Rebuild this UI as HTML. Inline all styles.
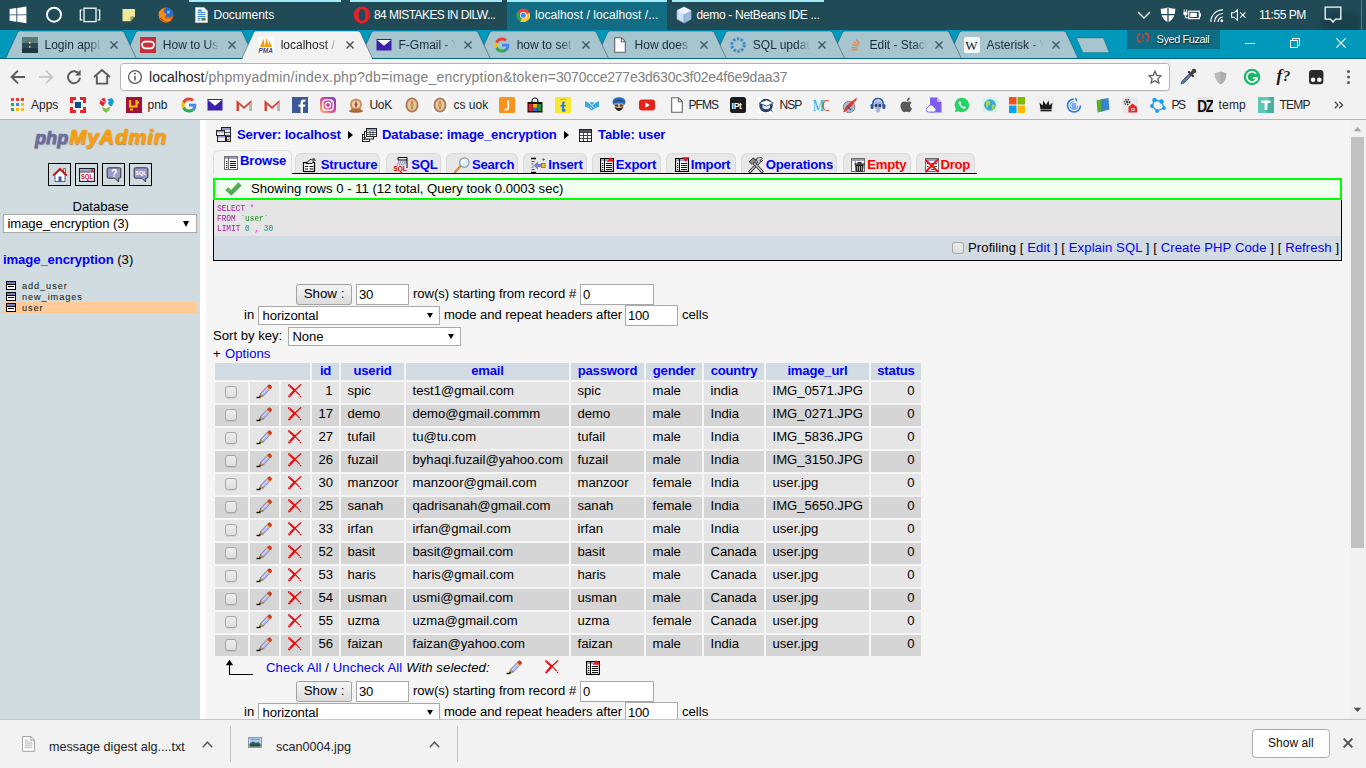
<!DOCTYPE html>
<html><head><meta charset="utf-8"><title>localhost / localhost / image_encryption / user | phpMyAdmin</title>
<style>
*{box-sizing:border-box;margin:0;padding:0}
html,body{width:1366px;height:768px;overflow:hidden;background:#f5f5f5;font-family:"Liberation Sans",sans-serif}
.abs{position:absolute}
#taskbar{position:absolute;left:0;top:0;width:1366px;height:30px;background:#1f4a56;color:#fff;font-size:12.5px}
#tabstrip{position:absolute;left:0;top:30px;width:1366px;height:29px;background:#0098bb;z-index:2}
#toolbar{position:absolute;left:0;top:58px;width:1366px;height:36px;background:#f2f2f2}
#bookmarks{position:absolute;left:0;top:94px;width:1366px;height:26px;background:#f2f2f2;border-bottom:1px solid #b6b4b6;font-size:12.5px;color:#222}
#content{position:absolute;left:0;top:120px;width:1366px;height:599px;overflow:hidden;background:#f5f5f5;font-size:13.12px;color:#000}
#side{position:absolute;left:0;top:0;width:200px;height:599px;background:#d0dce0}
#main{position:absolute;left:200px;top:0;width:1149px;height:599px;background:#f5f5f5}
#vscroll{position:absolute;left:1349px;top:0;width:17px;height:599px;background:#f1f1f1}
#dlbar{position:absolute;left:0;top:719px;width:1366px;height:49px;background:#f2f2f2;border-top:1px solid #c6c6c6;font-size:13px;color:#222}

.pg{position:absolute;left:0;top:-120px;width:1366px;height:768px}
a{color:#0000ff;text-decoration:none}
.bc{position:absolute;font-weight:bold;color:#0000ff;line-height:15px;white-space:nowrap;letter-spacing:-0.15px}
.arr{position:absolute;width:0;height:0;border-left:5.5px solid #000;border-top:4.5px solid transparent;border-bottom:4.5px solid transparent}
.tab{position:absolute;top:153px;height:20px;background:#e8e8e8;border:1px solid #dadada;border-bottom:none;border-radius:6px 6px 0 0}
.tab.act{top:150px;height:24px;background:#f5f5f5;border-color:#dcdcdc}
.tt{position:absolute;color:#0000ff;font-weight:bold;line-height:15px;letter-spacing:-0.2px;white-space:nowrap}.tt.red{color:#ff0000}
.ic{display:inline-block;width:16px;height:16px;vertical-align:-3px;margin-right:1px}
.sqlc{font-family:"Liberation Mono",monospace;font-size:7.8px;line-height:8.4px;color:#000;transform:scaleY(1.19);transform-origin:0 0;opacity:0.9}
.kw{color:#990099}.pk{color:#ff00ff}.bq{color:#008000}.nm{color:#008080}
.cb{position:absolute;width:12px;height:12px;border:1px solid #a6a6a6;border-radius:3px;background:linear-gradient(#ededed,#dedede)}
.btn{position:absolute;border:1px solid #a2a2a2;border-radius:2.5px;background:linear-gradient(#f5f5f5,#dcdcdc);text-align:center;line-height:18px;font-size:13.33px}
.inp{position:absolute;border:1px solid #a9a9a9;background:#fff;line-height:17px;padding:1px 0 0 2px;font-size:13.12px;letter-spacing:-0.3px}
.sel{position:absolute;border:1px solid #a9a9a9;background:#fff;line-height:17px;padding:0 0 0 3.5px;font-size:13.12px;letter-spacing:-0.1px}
.sel b{position:absolute;right:6px;top:6px;width:0;height:0;border-top:5.5px solid #000;border-left:3.5px solid transparent;border-right:3.5px solid transparent}
.nav{position:absolute;left:0;width:1366px;height:0}
.dt{border-collapse:separate;border-spacing:2px;table-layout:fixed;width:710px;font-size:13.12px}
.dt th{height:17px;background:#d3dce3;color:#0000ff;font-weight:bold;line-height:15px;padding:0;letter-spacing:-0.2px;vertical-align:top;text-align:center;white-space:nowrap}
.dt td{height:21px;padding:1px 6.5px 0 6.5px;line-height:15px;vertical-align:top;white-space:nowrap;overflow:hidden}
.dt tr.o td{background:#e5e5e5}.dt tr.e td{background:#d5d5d5}
.dt td.r{text-align:right}
.dt td.c{text-align:center;padding:2px 0 0 0}.dt td.c:first-child{padding-right:2px}
.cbx{display:inline-block;width:12px;height:12px;margin-top:2px;border:1px solid #a6a6a6;border-radius:3px;background:linear-gradient(#ededed,#dedede);box-shadow:0 1px 0 rgba(0,0,0,0.08)}

.logo{white-space:nowrap;line-height:24px;font-style:italic;font-weight:bold}
.php{font-size:18px;color:#6c6c9e;-webkit-text-stroke:0.7px #6c6c9e;text-shadow:0.5px 1.2px 1.2px rgba(50,50,80,0.55);letter-spacing:0.1px}
.mya{font-size:20.4px;color:#f99d10;-webkit-text-stroke:0.7px #f99d10;text-shadow:0.5px 1.2px 1.2px rgba(140,80,10,0.7);letter-spacing:0.85px;margin-left:1px}
.sbx{position:absolute;top:163px;width:23px;height:23px;border:1px solid #000}
.tl{position:absolute;left:6px;height:9px;white-space:nowrap;font-size:9.2px;line-height:9px;color:#111}
.tl svg{position:absolute;left:0;top:0}
.tl span{position:absolute;left:16px;top:0.5px;letter-spacing:0.92px}

.hl{top:0;height:2px;background:#a3ecf8}
.tk{top:8px;line-height:15px;font-size:12px;color:#fff;white-space:nowrap}

.ttl{top:8px;width:58px;height:16px;overflow:hidden;line-height:15px;font-size:12px;color:#1a2a32;white-space:nowrap;-webkit-mask-image:linear-gradient(90deg,#000 0,#000 44px,transparent 57px);mask-image:linear-gradient(90deg,#000 0,#000 44px,transparent 57px)}
.ttl.act{color:#222}
.bm{top:4px;line-height:15px;font-size:12px;color:#222;white-space:nowrap}
.dt2{top:20px;line-height:15px;font-size:12.6px;color:#222;white-space:nowrap}
</style></head><body>
<svg width="0" height="0" style="position:absolute">
<defs>
<symbol id="i-browse" viewBox="0 0 16 16"><rect x="1.5" y="1.5" width="13" height="13" fill="#fff" stroke="#6e6e6e"/><rect x="2" y="2" width="12" height="2" fill="#9a9acf"/><path d="M5.5 2v12" stroke="#6e6e6e"/><path d="M7 6.5h6M7 8.5h6M7 10.5h6M7 12.5h6" stroke="#111"/><path d="M3 6.5h1.4M3 8.5h1.4M3 10.5h1.4M3 12.5h1.4" stroke="#111"/></symbol>
<symbol id="i-struct" viewBox="0 0 16 16"><rect x="1.5" y="5.5" width="11" height="9" fill="#fff" stroke="#000" stroke-width="1.2"/><path d="M3 9.5h3M7.5 9.5h4M3 12h3M7.5 12h4" stroke="#000"/><path d="M4 6.5 L8 2.5 L13 2 L10 6.5Z" fill="#ddd" stroke="#000" stroke-width="0.9"/><path d="M9 2l3 3M11 1l3 3" stroke="#555" stroke-width="0.8"/></symbol>
<symbol id="i-sql" viewBox="0 0 16 16"><path d="M5 0.5h9v2.5h-9z" fill="#eee" stroke="#000"/><path d="M6 4l-2 4.5M8 4l-2 4.5M10 4l-2 4.5M12 4l-2 4.5M13.5 4l-1.5 3.5" stroke="#88c" stroke-width="0.9"/><path d="M14 3v8" stroke="#000"/><text x="0.4" y="14.3" font-family="Liberation Sans" font-weight="bold" font-size="6.6" fill="#d00000" textLength="13.4" lengthAdjust="spacingAndGlyphs">SQL</text></symbol>
<symbol id="i-search" viewBox="0 0 16 16"><path d="M1 15.2 L7 8.5" stroke="#d8801c" stroke-width="2.4" stroke-linecap="round"/><path d="M1 15.2 L7 8.5" stroke="#f4a94a" stroke-width="1" stroke-linecap="round"/><circle cx="10.3" cy="5.6" r="4.7" fill="#d4f0fc" stroke="#8a9aa8" stroke-width="1.2"/><circle cx="9.3" cy="4.6" r="2" fill="#fff" opacity="0.9"/></symbol>
<symbol id="i-insert" viewBox="0 0 16 16"><path d="M1 1.5h5M1 15.5h5" stroke="#000" stroke-width="1.3"/><path d="M1.5 4.5h3M1.5 7h2M1.5 10h2M1.5 12.5h3" stroke="#555"/><path d="M3.5 8.5 L8 4.5 V7 H11 V10 H8 V12.5Z" fill="#7b7bd8"/><rect x="11.5" y="6.5" width="3.6" height="4" fill="#f4c430" stroke="#8a6d00" stroke-width="0.8"/><path d="M13.5 1v3M12 2.5h3" stroke="#66c" stroke-width="0.9"/></symbol>
<symbol id="i-table" viewBox="0 0 16 16"><rect x="1.6" y="1.6" width="12.8" height="12.8" fill="#fff" stroke="#000" stroke-width="1.2"/><rect x="2.2" y="2.2" width="11.6" height="2" fill="#9a9acf"/><path d="M5.5 2v12" stroke="#000"/><path d="M7 6.5h6M7 8.5h6M7 10.5h6M7 12.5h6" stroke="#111"/><path d="M3 6.5h1.4M3 8.5h1.4M3 10.5h1.4M3 12.5h1.4" stroke="#111"/></symbol>
<symbol id="i-export" viewBox="0 0 16 16"><use href="#i-table"/><path d="M7.5 4.8 L11.5 0.2 L15.5 4.8Z" fill="#f01818"/></symbol>
<symbol id="i-import" viewBox="0 0 16 16"><use href="#i-table"/><path d="M8 0.3 H15.6 L11.8 4.9Z" fill="#e01030"/></symbol>
<symbol id="i-ops" viewBox="0 0 16 16"><path d="M2 14.5 L11.5 4.5" stroke="#222" stroke-width="3" stroke-linecap="round"/><path d="M2 14.5 L11.5 4.5" stroke="#bdbdbd" stroke-width="1.5" stroke-linecap="round"/><path d="M10 5.5 a3 3 0 1 1 4.2 -4 l-2 2 l0.8 1.4 l2 -1.8" fill="#ccc" stroke="#222" stroke-width="0.9"/><path d="M14 14.5 L5.5 5.5" stroke="#222" stroke-width="3" stroke-linecap="round"/><path d="M14 14.5 L5.5 5.5" stroke="#c8c8c8" stroke-width="1.5" stroke-linecap="round"/><path d="M1.2 4.8 L5 1 L8.5 3 L4 7.5Z" fill="#8a8a8a" stroke="#222" stroke-width="0.9"/></symbol>
<symbol id="i-empty" viewBox="0 0 16 16"><rect x="1.5" y="1.5" width="13" height="13" fill="#fff" stroke="#6e6e6e"/><rect x="2" y="2" width="12" height="2" fill="#9a9acf"/><path d="M5.5 2v12" stroke="#999"/><path d="M4.5 6.5h10v1.2h-10z" fill="#000"/><path d="M7.5 5.2h4v1.3h-4z" fill="#000"/><path d="M5.4 8 h8.2 l-0.6 6.6 h-7z" fill="#111"/><path d="M7.3 9v4.8M9.5 9v4.8M11.7 9v4.8" stroke="#eee" stroke-width="0.8"/></symbol>
<symbol id="i-drop" viewBox="0 0 16 16"><rect x="1.5" y="1.5" width="13" height="13" fill="#f4f4f4" stroke="#6e6e6e"/><rect x="2" y="2" width="12" height="2" fill="#9a9acf"/><path d="M7 6.5h6M7 9.5h6M7 12.5h6" stroke="#555"/><path d="M3 6.5h1.4M3 9.5h1.4M3 12.5h1.4" stroke="#111"/><path d="M2 3.5 L14 14.5 M13.5 3 L2 14.5" stroke="#e8141c" stroke-width="2.1" stroke-linecap="round"/></symbol>
<symbol id="i-pencil" viewBox="0 0 16 16"><path d="M0.5 13.5 H4.5" stroke="#000" stroke-width="1.3"/><path d="M3.2 13.2 L4.6 9.4 L7.4 12Z" fill="#c99a2c" stroke="#6b4d10" stroke-width="0.5"/><path d="M3.2 13.2 L3.8 11.6 L4.9 12.6Z" fill="#111"/><path d="M4.6 9.4 L11 2.6 L13.8 5.3 L7.4 12Z" fill="#b4b4ec" stroke="#6868a8" stroke-width="0.7"/><path d="M5.7 10.7 L12.2 3.9" stroke="#e4e4ff" stroke-width="0.9"/><path d="M10.3 3.3 L11.4 2.2 L14.2 4.9 L13.1 6Z" fill="#f0c020"/><path d="M11.4 2.2 L12.7 0.9 Q13.6 0.3 14.6 1.3 L15.2 1.9 Q16 2.9 15.3 3.7 L14.2 4.9Z" fill="#e03424" stroke="#a01810" stroke-width="0.5"/></symbol>
<symbol id="i-x" viewBox="-0.8 0 16 16"><path d="M1.3 1.2 L7 6.2" stroke="#e80c0c" stroke-width="2.1" stroke-linecap="round"/><path d="M7 6.2 L11.6 10.8" stroke="#e80c0c" stroke-width="1.2" stroke-linecap="round"/><circle cx="12.7" cy="12.5" r="0.8" fill="#e80c0c"/><path d="M13 0.8 L7 6.2" stroke="#e80c0c" stroke-width="1.3" stroke-linecap="round"/><path d="M7 6.2 L1.5 12.3" stroke="#e80c0c" stroke-width="2.3" stroke-linecap="round"/><circle cx="1.7" cy="1.7" r="0.5" fill="#ffb030"/><circle cx="1.9" cy="11.6" r="0.5" fill="#ffb030"/></symbol>
<symbol id="i-tb" viewBox="0 0 10 9"><rect x="0.5" y="0.5" width="9" height="8" fill="#fff" stroke="#000"/><rect x="1" y="1" width="8" height="2" fill="#7b7bc8"/><path d="M1 3.5h8M2 5.5h6" stroke="#000"/></symbol>
</defs></svg>
<div id="taskbar"><!-- start -->
<svg class="abs" style="left:9px;top:6px" width="18" height="18" viewBox="0 0 18 18"><path d="M0.6 3.1 L7.4 2.1 V8.4 H0.6Z M8.3 2 L17.4 0.6 V8.4 H8.3Z M0.6 9.3 H7.4 V15.7 L0.6 14.7Z M8.3 9.3 H17.4 V17.2 L8.3 15.8Z" fill="#fff"/></svg>
<svg class="abs" style="left:45px;top:6px" width="18" height="18" viewBox="0 0 18 18"><circle cx="9" cy="8.7" r="7" fill="none" stroke="#fff" stroke-width="1.9"/></svg>
<svg class="abs" style="left:79px;top:7px" width="22" height="16" viewBox="0 0 22 16"><rect x="5" y="1.2" width="12" height="13.4" fill="none" stroke="#fff" stroke-width="1.3"/><path d="M3.4 3 H1.3 V12.8 H3.4 M18.6 3 H20.7 V12.8 H18.6" fill="none" stroke="#fff" stroke-width="1.2"/></svg>
<svg class="abs" style="left:122px;top:9px" width="14" height="13" viewBox="0 0 14 13"><path d="M0.5 0 H13 V7.5 L8.5 12.2 H0.5Z" fill="#f3e798"/><path d="M13 7.5 L8.5 12.2 V7.5Z" fill="#8c9872"/></svg>
<svg class="abs" style="left:158px;top:7px" width="16" height="16" viewBox="0 0 16 16"><circle cx="8" cy="8" r="7.4" fill="#e66000"/><path d="M8 0.6 A7.4 7.4 0 0 1 15.4 8 Q13 11 9.5 10 Q6 9 6.5 5.5 Q5 3 8 0.6Z" fill="#2a6ecb"/><path d="M1 5 Q3 1.5 7 1 Q4.5 3.5 6 6 Q8.5 6 8.5 8 Q6.5 9 7 11 Q10 13 14 10.5 Q12 15.4 8 15.4 Q1 15 0.7 8 Q0.7 6 1 5Z" fill="#f08c1a"/><path d="M2 12 Q5 15.6 10 14.8 Q5 14.5 3 10Z" fill="#d03c0c"/><circle cx="10.4" cy="5" r="1.6" fill="#6ab4ef"/></svg>
<!-- task buttons -->
<div class="abs hl" style="left:189px;width:152px"></div>
<svg class="abs" style="left:195px;top:7px" width="13" height="16" viewBox="0 0 13 16"><path d="M0.5 0.5 H9 L12.5 4 V15.5 H0.5Z" fill="#fdfdfd" stroke="#c8c8c8" stroke-width="0.8"/><path d="M2.5 5.5h8M2.5 7.5h8M2.5 9.5h8M2.5 11.5h3M2.5 13.2h3" stroke="#2b7cd3" stroke-width="0.9"/><path d="M3 3.5h4" stroke="#2b7cd3" stroke-width="1.6"/><rect x="6.5" y="10.8" width="4" height="2.8" fill="#4a7a4a"/></svg>
<div class="abs tk" style="left:213.5px">Documents</div>
<div class="abs hl" style="left:350px;width:152px"></div>
<svg class="abs" style="left:353px;top:6px" width="18" height="18" viewBox="0 0 18 18"><ellipse cx="9" cy="9" rx="8.2" ry="8.4" fill="#e8202c"/><ellipse cx="9" cy="9" rx="3.5" ry="6" fill="#1f4a56"/><path d="M12.6 2.5 A8.3 8.3 0 0 1 12.6 15.5 A7 7.5 0 0 0 12.6 2.5Z" fill="#a80c18"/></svg>
<div class="abs tk" style="left:374px;letter-spacing:-0.56px">84 MISTAKES IN DILW...</div>
<div class="abs" style="left:507px;top:0;width:160px;height:30px;background:#126c83"></div>
<div class="abs hl" style="left:507px;width:160px"></div>
<svg class="abs" style="left:515.8px;top:7.6px" width="14.6" height="14.6" viewBox="0 0 16 16"><circle cx="8" cy="8" r="7.5" fill="#e8453c"/><path d="M8 8 L1.5 4.3 A7.5 7.5 0 0 0 6.5 15.35 L8 8Z" fill="#2aa252"/><path d="M1.5 4.25 A7.5 7.5 0 0 0 4.75 14.75 L8 8Z" fill="#2aa252"/><path d="M8 8 L4.75 14.75 A7.5 7.5 0 0 0 15 5.3 L8 8Z" fill="#fcc934"/><path d="M8 8 L11.2 13.6 L5 15 L3.5 12Z" fill="#2aa252" opacity="0"/><circle cx="8" cy="8" r="3.6" fill="#fff"/><circle cx="8" cy="8" r="2.8" fill="#4587f3"/></svg>
<div class="abs tk" style="left:535px;letter-spacing:0.08px">localhost / localhost /...</div>
<div class="abs hl" style="left:672px;width:152px"></div>
<svg class="abs" style="left:676px;top:6px" width="16" height="18" viewBox="0 0 16 18"><path d="M8 1 L15 4.5 V13 L8 17 L1 13 V4.5Z" fill="#cfe2f3" stroke="#8fb0d4" stroke-width="0.8"/><path d="M8 8.2 L15 4.5 V13 L8 17Z" fill="#9bb8dc"/><path d="M8 8.2 L1 4.5 L8 1 L15 4.5Z" fill="#eef5fc"/><path d="M8 8.2V17" stroke="#6e8fb8" stroke-width="0.7"/></svg>
<div class="abs tk" style="left:696.5px;letter-spacing:-0.3px">demo - NetBeans IDE ...</div>
<!-- tray -->
<svg class="abs" style="left:1137px;top:10px" width="14" height="10" viewBox="0 0 14 10"><path d="M1 2 L7 8 L13 2" fill="none" stroke="#fff" stroke-width="1.3"/></svg>
<svg class="abs" style="left:1160px;top:7px" width="16" height="16" viewBox="0 0 16 16"><path d="M8 0.3 Q11.5 1.8 15.3 1.8 Q15.6 11.5 8 15.6 Q0.4 11.5 0.7 1.8 Q4.5 1.8 8 0.3Z" fill="#fff"/><path d="M8 0.3 V15.6 M0.6 7.6 H15.3" stroke="#1f4a56" stroke-width="1.3"/></svg>
<svg class="abs" style="left:1183px;top:9px" width="18" height="12" viewBox="0 0 18 12"><rect x="5.7" y="2.2" width="10.6" height="7.4" fill="none" stroke="#fff" stroke-width="1.2"/><rect x="16.8" y="4.2" width="1.2" height="3.4" fill="#fff"/><rect x="7.2" y="3.8" width="6.6" height="4.2" fill="#fff"/><path d="M1.2 0.5v2.2M3.6 0.5v2.2" stroke="#fff" stroke-width="1"/><path d="M0.4 2.7h4v2.2q0 1.5-2 1.5q-2 0-2-1.5z" fill="#fff"/><path d="M2.4 6.4v2.4h3" stroke="#fff" stroke-width="1" fill="none"/></svg>
<svg class="abs" style="left:1210px;top:9px" width="14" height="14" viewBox="0 0 14 14"><path d="M0.8 13 A12 12 0 0 1 13 0.9" fill="none" stroke="#fff" stroke-width="1.2"/><path d="M4.4 13 A8.5 8.5 0 0 1 13 4.5" fill="none" stroke="#fff" stroke-width="1.2"/><path d="M8 13 A5 5 0 0 1 13 8" fill="none" stroke="#fff" stroke-width="1.2"/><circle cx="11.8" cy="11.8" r="1.4" fill="#fff"/></svg>
<svg class="abs" style="left:1231px;top:9px" width="16" height="12" viewBox="0 0 16 12"><path d="M0.6 3.8 H3 L6.4 0.8 V11.2 L3 8.2 H0.6Z" fill="none" stroke="#fff" stroke-width="1.1"/><path d="M9.2 3.4 L14.4 8.6 M14.4 3.4 L9.2 8.6" stroke="#fff" stroke-width="1.1"/></svg>
<div class="abs tk" style="left:1259px;letter-spacing:-0.45px">11:55 PM</div>
<div class="abs" style="left:1322px;top:12px;width:38px;height:18px;border-radius:9px 9px 0 0;background:#1a404b;filter:blur(2px)"></div>
<svg class="abs" style="left:1324px;top:6px" width="18" height="18" viewBox="0 0 18 18"><path d="M1.2 1.2 H16.8 V13.2 H11.5 L9 16 L6.5 13.2 H1.2Z" fill="none" stroke="#fff" stroke-width="1.3"/></svg>
<div class="abs" style="left:1361px;top:0;width:1px;height:30px;background:#5d7d86"></div>
</div>
<div id="tabstrip"><svg class="abs" style="left:0;top:0" width="1366" height="29" viewBox="0 0 1366 29"><path d="M947.6 28.5 L959.4 2.6 Q960.1 1 961.8 1 H1063.7 Q1065.4 1 1066.1 2.6 L1078.2 28.5Z" fill="#a6c5cf" stroke="rgba(0,45,65,0.42)" stroke-width="1"/><path d="M830.7 28.5 L842.5 2.6 Q843.2 1 844.9 1 H946.8 Q948.5 1 949.2 2.6 L961.3 28.5Z" fill="#a6c5cf" stroke="rgba(0,45,65,0.42)" stroke-width="1"/><path d="M714.0 28.5 L725.8 2.6 Q726.5 1 728.2 1 H830.1 Q831.8 1 832.5 2.6 L844.6 28.5Z" fill="#a6c5cf" stroke="rgba(0,45,65,0.42)" stroke-width="1"/><path d="M595.8 28.5 L607.6 2.6 Q608.3 1 610.0 1 H711.9 Q713.6 1 714.3 2.6 L726.4 28.5Z" fill="#a6c5cf" stroke="rgba(0,45,65,0.42)" stroke-width="1"/><path d="M477.9 28.5 L489.7 2.6 Q490.4 1 492.1 1 H594.0 Q595.7 1 596.4 2.6 L608.5 28.5Z" fill="#a6c5cf" stroke="rgba(0,45,65,0.42)" stroke-width="1"/><path d="M359.7 28.5 L371.5 2.6 Q372.2 1 373.9 1 H475.8 Q477.5 1 478.2 2.6 L490.3 28.5Z" fill="#a6c5cf" stroke="rgba(0,45,65,0.42)" stroke-width="1"/><path d="M124.0 28.5 L135.8 2.6 Q136.5 1 138.2 1 H240.1 Q241.8 1 242.5 2.6 L254.6 28.5Z" fill="#a6c5cf" stroke="rgba(0,45,65,0.42)" stroke-width="1"/><path d="M5.7 28.5 L17.5 2.6 Q18.2 1 19.9 1 H121.8 Q123.5 1 124.2 2.6 L136.3 28.5Z" fill="#a6c5cf" stroke="rgba(0,45,65,0.42)" stroke-width="1"/><rect x="0" y="28" width="1366" height="1" fill="#0098bb"/><rect x="0" y="28" width="1366" height="1" fill="rgba(0,45,65,0.5)"/><path d="M241.9 28.5 L253.7 2.6 Q254.4 1 256.1 1 H358.0 Q359.7 1 360.4 2.6 L372.5 28.5Z" fill="#f2f2f2" stroke="rgba(0,45,65,0.42)" stroke-width="1"/><rect x="242.6" y="28" width="129.2" height="1" fill="#f2f2f2"/><path d="M1076.6 8 H1103.3 L1109.2 22.6 H1082.9Z" fill="#a6c5cf" stroke="rgba(0,45,65,0.3)" stroke-width="0.8"/></svg>
<svg class="abs" style="left:22.0px;top:7px" width="16" height="16" viewBox="0 0 16 16"><rect width="16" height="16" fill="#2f4a52"/><rect y="0" width="16" height="6" fill="#5c7a78"/><rect y="11" width="16" height="5" fill="#1e3844"/><rect x="7" y="5" width="1.6" height="1.6" fill="#e8e8a0"/><rect x="7" y="9" width="1.6" height="1.6" fill="#c8d090"/></svg>
<div class="abs ttl" style="left:44.5px">Login appl</div>
<svg class="abs" style="left:110.0px;top:11px" width="8" height="8" viewBox="0 0 8 8"><path d="M0.5 0.5 L7.5 7.5 M7.5 0.5 L0.5 7.5" stroke="#3b5661" stroke-width="1.35"/></svg>
<svg class="abs" style="left:140.3px;top:7px" width="16" height="16" viewBox="0 0 16 16"><rect width="16" height="16" fill="#c4303c"/><rect x="2" y="4.7" width="12" height="6.6" rx="3.3" fill="none" stroke="#fff" stroke-width="1.7"/></svg>
<div class="abs ttl" style="left:162.8px">How to Us</div>
<svg class="abs" style="left:228.3px;top:11px" width="8" height="8" viewBox="0 0 8 8"><path d="M0.5 0.5 L7.5 7.5 M7.5 0.5 L0.5 7.5" stroke="#3b5661" stroke-width="1.35"/></svg>
<svg class="abs" style="left:258.2px;top:7px" width="16" height="16" viewBox="0 0 16 16"><rect width="16" height="16" fill="#fff"/><path d="M2 10 L5.5 1.5 L6.8 10Z M6.6 10 L8.6 0.8 L11 10Z M10.6 10 L11 3 L14 10Z" fill="#f89c0e"/><text x="0.6" y="15.6" font-family="Liberation Sans" font-style="italic" font-weight="bold" font-size="6.4" fill="#3a3a78">PMA</text></svg>
<div class="abs ttl act" style="left:280.7px">localhost /</div>
<svg class="abs" style="left:346.2px;top:11px" width="8" height="8" viewBox="0 0 8 8"><path d="M0.5 0.5 L7.5 7.5 M7.5 0.5 L0.5 7.5" stroke="#4a4a4a" stroke-width="1.35"/></svg>
<svg class="abs" style="left:376.0px;top:7px" width="16" height="16" viewBox="0 0 16 16"><rect x="0.5" y="2.5" width="15" height="11" fill="#3a20a8"/><path d="M0.5 2.5 L8 8.8 L15.5 2.5Z" fill="#fff"/><path d="M0.5 2.5 H15.5" stroke="#3a20a8"/></svg>
<div class="abs ttl" style="left:398.5px">F-Gmail - Y</div>
<svg class="abs" style="left:464.0px;top:11px" width="8" height="8" viewBox="0 0 8 8"><path d="M0.5 0.5 L7.5 7.5 M7.5 0.5 L0.5 7.5" stroke="#3b5661" stroke-width="1.35"/></svg>
<svg class="abs" style="left:494.2px;top:7px" width="16" height="16" viewBox="0 0 16 16"><path d="M15.3 8.2c0-.6 0-1-.1-1.5H8v2.9h4.2c-.1.8-.6 1.9-1.6 2.6l2.5 1.9c1.4-1.4 2.2-3.4 2.2-5.9z" fill="#4285f4"/><path d="M8 15.6c2 0 3.7-.7 5-1.9l-2.5-1.9c-.6.5-1.5.8-2.5.8-2 0-3.6-1.3-4.2-3.1l-2.5 2c1.2 2.4 3.7 4.1 6.7 4.1z" fill="#34a853"/><path d="M3.8 9.5c-.2-.5-.3-1-.3-1.5s.1-1 .3-1.5l-2.5-2C.7 5.6.4 6.8.4 8s.3 2.4.9 3.5z" fill="#fbbc05"/><path d="M8 3.4c1.4 0 2.4.6 2.9 1.1l2.2-2.1C11.7 1.2 10 .4 8 .4c-3 0-5.5 1.7-6.7 4.1l2.5 2c.6-1.8 2.2-3.1 4.2-3.1z" fill="#ea4335"/></svg>
<div class="abs ttl" style="left:516.7px">how to set</div>
<svg class="abs" style="left:582.2px;top:11px" width="8" height="8" viewBox="0 0 8 8"><path d="M0.5 0.5 L7.5 7.5 M7.5 0.5 L0.5 7.5" stroke="#3b5661" stroke-width="1.35"/></svg>
<svg class="abs" style="left:612.1px;top:7px" width="16" height="16" viewBox="0 0 16 16"><path d="M2.7 0.7 H9.5 L13.3 4.5 V15.3 H2.7Z" fill="#fff" stroke="#5f6368" stroke-width="1.1"/><path d="M9.3 0.9 V4.7 H13.1" fill="none" stroke="#5f6368" stroke-width="1.1"/></svg>
<div class="abs ttl" style="left:634.6px">How does</div>
<svg class="abs" style="left:700.1px;top:11px" width="8" height="8" viewBox="0 0 8 8"><path d="M0.5 0.5 L7.5 7.5 M7.5 0.5 L0.5 7.5" stroke="#3b5661" stroke-width="1.35"/></svg>
<svg class="abs" style="left:730.3px;top:7px" width="16" height="16" viewBox="0 0 16 16"><circle cx="8" cy="8" r="6.2" fill="none" stroke="#3f8dc8" stroke-width="3" stroke-dasharray="2.4 1.5"/></svg>
<div class="abs ttl" style="left:752.8px">SQL updat</div>
<svg class="abs" style="left:818.3px;top:11px" width="8" height="8" viewBox="0 0 8 8"><path d="M0.5 0.5 L7.5 7.5 M7.5 0.5 L0.5 7.5" stroke="#3b5661" stroke-width="1.35"/></svg>
<svg class="abs" style="left:847.0px;top:7px" width="16" height="16" viewBox="0 0 16 16"><path d="M3 10.5 V14.5 H12 V10.5" fill="none" stroke="#bcbbbb" stroke-width="1.2"/><path d="M4.5 12.8 H10.5" stroke="#f48024" stroke-width="1.2"/><path d="M4.6 10.3 L10.5 11" stroke="#f48024" stroke-width="1.2"/><path d="M5.2 7.6 L10.8 9.2" stroke="#f48024" stroke-width="1.2"/><path d="M6.6 4.8 L11.5 7.7" stroke="#f48024" stroke-width="1.2"/><path d="M8.9 2.3 L12.6 6.5" stroke="#f48024" stroke-width="1.2"/></svg>
<div class="abs ttl" style="left:869.5px">Edit - Stack</div>
<svg class="abs" style="left:935.0px;top:11px" width="8" height="8" viewBox="0 0 8 8"><path d="M0.5 0.5 L7.5 7.5 M7.5 0.5 L0.5 7.5" stroke="#3b5661" stroke-width="1.35"/></svg>
<svg class="abs" style="left:963.9px;top:7px" width="16" height="16" viewBox="0 0 16 16"><rect width="16" height="16" rx="2" fill="#f4fafc"/><text x="1.2" y="12.6" font-family="Liberation Serif" font-size="13" fill="#222">W</text></svg>
<div class="abs ttl" style="left:986.4px">Asterisk - V</div>
<svg class="abs" style="left:1051.9px;top:11px" width="8" height="8" viewBox="0 0 8 8"><path d="M0.5 0.5 L7.5 7.5 M7.5 0.5 L0.5 7.5" stroke="#3b5661" stroke-width="1.35"/></svg>
<div class="abs" style="left:1127px;top:0;width:93px;height:18.5px;background:#0f6c85"></div>
<svg class="abs" style="left:1136px;top:2px" width="14" height="12" viewBox="0 0 14 12"><path d="M4 1.2 A5 5 0 0 0 3.2 9.5 M10 1.2 A5 5 0 0 1 10.8 9.5" fill="none" stroke="#e8392c" stroke-width="1.3"/><path d="M1.2 8 L3.2 10.2 L5.2 8.6" fill="none" stroke="#e8392c" stroke-width="1.1"/><path d="M8.8 2.4 L10.2 0.6 L12.2 2.2" fill="none" stroke="#e8392c" stroke-width="1.1"/><path d="M7 2.5 V6.8 M7 8.2 V9.6" stroke="#e8392c" stroke-width="1.3"/></svg>
<div class="abs" style="left:1156.5px;top:2px;line-height:15px;font-size:11px;letter-spacing:-0.42px;color:#fff;text-shadow:0 0 2px rgba(0,0,0,0.6),1px 1px 1px rgba(0,0,0,0.5);white-space:nowrap">Syed Fuzail</div>
<div class="abs" style="left:1245px;top:13px;width:10px;height:1px;background:#fff"></div>
<svg class="abs" style="left:1290px;top:8px" width="10" height="10" viewBox="0 0 10 10"><path d="M0.5 2.5 H7.5 V9.5 H0.5Z M2.5 2.5 V0.5 H9.5 V7.5 H7.5" fill="none" stroke="#fff" stroke-width="1"/></svg>
<svg class="abs" style="left:1336px;top:8px" width="10" height="10" viewBox="0 0 10 10"><path d="M0.4 0.4 L9.6 9.6 M9.6 0.4 L0.4 9.6" stroke="#fff" stroke-width="1.15"/></svg></div>
<div id="toolbar"><svg class="abs" style="left:10px;top:11px" width="16" height="16" viewBox="0 0 16 16"><path d="M15 8 H2.6 M8 1.6 L1.6 8 L8 14.4" fill="none" stroke="#5a5a5a" stroke-width="1.9"/></svg>
<svg class="abs" style="left:38px;top:11px" width="16" height="16" viewBox="0 0 16 16"><path d="M1 8 H13.4 M8 1.6 L14.4 8 L8 14.4" fill="none" stroke="#c9c9c9" stroke-width="1.9"/></svg>
<svg class="abs" style="left:66px;top:11px" width="16" height="16" viewBox="0 0 16 16"><path d="M13.2 5.2 A6 6 0 1 0 14 8.6" fill="none" stroke="#5a5a5a" stroke-width="1.9"/><path d="M14.6 0.8 V6.4 H9Z" fill="#5a5a5a"/></svg>
<svg class="abs" style="left:93px;top:10px" width="18" height="17" viewBox="0 0 18 17"><path d="M1 9 L9 2 L17 9 M3.8 7.8 V15.6 H14.2 V7.8" fill="none" stroke="#5a5a5a" stroke-width="1.9"/></svg>
<div class="abs" style="left:120px;top:5px;width:1050px;height:28px;background:#fff;border:1px solid #b3b3b3;border-radius:3.5px;box-shadow:0 1px 0 rgba(0,0,0,0.04)"></div>
<svg class="abs" style="left:127px;top:11px" width="16" height="16" viewBox="0 0 16 16"><circle cx="8" cy="8" r="6.4" fill="none" stroke="#5a5a5a" stroke-width="1.3"/><path d="M8 7 V11.6" stroke="#5a5a5a" stroke-width="1.5"/><circle cx="8" cy="4.8" r="0.95" fill="#5a5a5a"/></svg>
<div class="abs" style="left:149px;top:10px;line-height:18px;font-size:14px;white-space:nowrap;color:#808080;letter-spacing:0.02px"><span style="color:#222">localhost</span><span style="letter-spacing:0.19px">/phpmyadmin/index.php?db=image_encryption&amp;token=</span><span style="letter-spacing:-0.24px">3070cce277e3d630c3f02e4f6e9daa37</span></div>
<svg class="abs" style="left:1148px;top:12px" width="14" height="14" viewBox="0 0 14 14"><path d="M7 1.2 L8.8 5.3 L13.2 5.7 L9.9 8.6 L10.9 13 L7 10.7 L3.1 13 L4.1 8.6 L0.8 5.7 L5.2 5.3Z" fill="none" stroke="#5a5a5a" stroke-width="1.25" stroke-linejoin="miter"/></svg>
<!-- extensions -->
<svg class="abs" style="left:1180px;top:10px" width="17" height="17" viewBox="0 0 17 17"><path d="M1 16 L2 13 L9.5 5.5 L11.5 7.5 L4 15Z" fill="#4a78d8" stroke="#555" stroke-width="0.9"/><path d="M9 4 L13 8" stroke="#333" stroke-width="2.2" stroke-linecap="round"/><path d="M11 6 L13.6 3.4" stroke="#444" stroke-width="3.4" stroke-linecap="round"/><circle cx="14" cy="3" r="2.3" fill="#444"/></svg>
<svg class="abs" style="left:1214px;top:12.5px" width="13" height="14" viewBox="0 0 15 16"><path d="M7.5 0.6 Q10.5 2.2 14.2 2.4 Q14.5 11.5 7.5 15.4 Q0.5 11.5 0.8 2.4 Q4.5 2.2 7.5 0.6Z" fill="#b9b9b9"/><path d="M7.5 0.6 Q10.5 2.2 14.2 2.4 Q14.5 11.5 7.5 15.4Z" fill="#adadad"/></svg>
<svg class="abs" style="left:1243px;top:10px" width="18" height="18" viewBox="0 0 18 18"><circle cx="9" cy="9" r="8.3" fill="#1fb56c"/><path d="M13 5.8 A5.1 5.1 0 1 0 13.9 10 H9.8" fill="none" stroke="#fff" stroke-width="1.7"/><path d="M13.9 10 V12.6" stroke="#fff" stroke-width="1.5"/></svg>
<div class="abs" style="left:1276.5px;top:6px;line-height:22px;font-family:'Liberation Serif',serif;font-style:italic;font-weight:bold;font-size:17.5px;color:#1a1a1a;white-space:nowrap">f<span style="font-size:15px;margin-left:0.5px">?</span></div>
<svg class="abs" style="left:1309px;top:12px" width="15" height="15" viewBox="0 0 15 15"><rect x="0" y="0" width="14.4" height="14.2" rx="3.2" fill="#2a2a2a"/><circle cx="4.1" cy="9.8" r="2.3" fill="#fff"/><circle cx="10.3" cy="9.8" r="2.3" fill="#fff"/></svg>
<svg class="abs" style="left:1346px;top:11px" width="5" height="16" viewBox="0 0 5 16"><circle cx="2.5" cy="2.6" r="1.5" fill="#5a5a5a"/><circle cx="2.5" cy="8" r="1.5" fill="#5a5a5a"/><circle cx="2.5" cy="13.4" r="1.5" fill="#5a5a5a"/></svg>
</div>
<div id="bookmarks"><svg class="abs" style="left:10px;top:3px" width="16" height="16" viewBox="0 0 16 16"><g><rect x="1" y="1" width="3" height="3" fill="#ea4335"/><rect x="6" y="1" width="3" height="3" fill="#ea4335"/><rect x="11" y="1" width="3" height="3" fill="#ea4335"/><rect x="1" y="6" width="3" height="3" fill="#34a853"/><rect x="6" y="6" width="3" height="3" fill="#4285f4"/><rect x="11" y="6" width="3" height="3" fill="#fbbc05"/><rect x="1" y="11" width="3" height="3" fill="#34a853"/><rect x="6" y="11" width="3" height="3" fill="#fbbc05"/><rect x="11" y="11" width="3" height="3" fill="#fbbc05"/></g></svg>
<svg class="abs" style="left:70px;top:3px" width="16" height="16" viewBox="0 0 16 16"><path d="M0 0 H6 V3 H3 V6 H0Z M10 0 H16 V6 H13 V3 H10Z M0 10 H3 V13 H6 V16 H0Z M16 10 V16 H10 V13 H13 V10Z" fill="#ed232a"/><rect x="5" y="5" width="6" height="6" fill="#004c8f"/></svg>
<svg class="abs" style="left:98px;top:3px" width="16" height="16" viewBox="0 0 16 16"><path d="M1.5 6.5 Q2 2 6.5 0.8 L8 5 L5 9.5Z" fill="#ee1c25"/><path d="M3.2 3.5 L7 5.2" stroke="#fff" stroke-width="0.9"/><path d="M9.5 2.2 L14 1 L16 4.5 L13.8 9.5 L11 8.2 L9.8 5.5 L11 4.8Z" fill="#1c9ad6"/><path d="M4 10 L8 11.8 L12.5 9.5 L11.5 13 L8 15.8 L5 13.5Z" fill="#7fc241"/></svg>
<svg class="abs" style="left:126px;top:3px" width="16" height="16" viewBox="0 0 16 16"><rect width="16" height="16" fill="#a2103c"/><path d="M4 3 V9.5 H10.5 V3 M10.5 5.5 H13" fill="none" stroke="#fbbc09" stroke-width="2.2"/><rect x="4" y="11.5" width="3" height="2" fill="#fbbc09"/></svg>
<svg class="abs" style="left:181px;top:3px" width="16" height="16" viewBox="0 0 16 16"><path d="M15.3 8.2c0-.6 0-1-.1-1.5H8v2.9h4.2c-.1.8-.6 1.9-1.6 2.6l2.5 1.9c1.4-1.4 2.2-3.4 2.2-5.9z" fill="#4285f4"/><path d="M8 15.6c2 0 3.7-.7 5-1.9l-2.5-1.9c-.6.5-1.5.8-2.5.8-2 0-3.6-1.3-4.2-3.1l-2.5 2c1.2 2.4 3.7 4.1 6.7 4.1z" fill="#34a853"/><path d="M3.8 9.5c-.2-.5-.3-1-.3-1.5s.1-1 .3-1.5l-2.5-2C.7 5.6.4 6.8.4 8s.3 2.4.9 3.5z" fill="#fbbc05"/><path d="M8 3.4c1.4 0 2.4.6 2.9 1.1l2.2-2.1C11.7 1.2 10 .4 8 .4c-3 0-5.5 1.7-6.7 4.1l2.5 2c.6-1.8 2.2-3.1 4.2-3.1z" fill="#ea4335"/></svg>
<svg class="abs" style="left:207px;top:3px" width="16" height="16" viewBox="0 0 16 16"><rect x="0.5" y="2.5" width="15" height="11" fill="#3a20a8"/><path d="M0.5 2.5 L8 8.8 L15.5 2.5Z" fill="#fff"/><path d="M0.5 2.5 H15.5" stroke="#3a20a8"/></svg>
<svg class="abs" style="left:236px;top:3px" width="16" height="16" viewBox="0 0 16 16"><rect x="0.5" y="2.5" width="15" height="11.5" rx="1" fill="#f2f2f2"/><path d="M0.5 14 V3 L8 9.5 L15.5 3 V14 H13 V7.5 L8 12 L3 7.5 V14Z" fill="#d44638"/><path d="M13 14 V7.5 L15.5 5 V14Z" fill="#b8b8b8"/></svg>
<svg class="abs" style="left:264px;top:3px" width="16" height="16" viewBox="0 0 16 16"><rect x="0.5" y="2.5" width="15" height="11.5" rx="1" fill="#f2f2f2"/><path d="M0.5 14 V3 L8 9.5 L15.5 3 V14 H13 V7.5 L8 12 L3 7.5 V14Z" fill="#d44638"/><path d="M13 14 V7.5 L15.5 5 V14Z" fill="#b8b8b8"/></svg>
<svg class="abs" style="left:292px;top:3px" width="16" height="16" viewBox="0 0 16 16"><rect width="16" height="16" fill="#3b5998"/><path d="M11 16 V9.8 H13.1 L13.4 7.4 H11 V5.9 Q11 4.8 12.2 4.8 H13.5 V2.7 Q12.6 2.6 11.7 2.6 Q8.6 2.6 8.6 5.6 V7.4 H6.5 V9.8 H8.6 V16Z" fill="#fff"/></svg>
<svg class="abs" style="left:320px;top:3px" width="16" height="16" viewBox="0 0 16 16"><defs><linearGradient id="ig" x1="0" y1="1" x2="1" y2="0"><stop offset="0" stop-color="#fdc468"/><stop offset="0.45" stop-color="#df4996"/><stop offset="1" stop-color="#6b3fc9"/></linearGradient></defs><rect width="16" height="16" rx="4" fill="url(#ig)"/><rect x="2.8" y="2.8" width="10.4" height="10.4" rx="3" fill="none" stroke="#fff" stroke-width="1.3"/><circle cx="8" cy="8" r="2.6" fill="none" stroke="#fff" stroke-width="1.3"/><circle cx="11.4" cy="4.6" r="0.8" fill="#fff"/></svg>
<svg class="abs" style="left:348px;top:3px" width="16" height="16" viewBox="0 0 16 16"><ellipse cx="8" cy="14" rx="7" ry="1.8" fill="#a8683c"/><circle cx="8" cy="7.5" r="6" fill="#c89058"/><circle cx="8" cy="7.5" r="4" fill="#e8d8a8"/><path d="M8 3.5 L9.5 7.5 L8 11.5 L6.5 7.5Z" fill="#c04040"/><rect x="3" y="11.5" width="10" height="2.4" rx="1" fill="#b0703c"/></svg>
<svg class="abs" style="left:404px;top:3px" width="16" height="16" viewBox="0 0 16 16"><ellipse cx="8" cy="8" rx="6.5" ry="7.6" fill="#b07858"/><ellipse cx="8" cy="8" rx="4.6" ry="5.8" fill="#e0cc98"/><path d="M8 3 L9.6 8 L8 13 L6.4 8Z" fill="#c04848"/><ellipse cx="8" cy="8" rx="1.4" ry="2" fill="#d8b050"/></svg>
<svg class="abs" style="left:432px;top:3px" width="16" height="16" viewBox="0 0 16 16"><rect width="16" height="16" fill="#fff"/><ellipse cx="8" cy="8" rx="6.5" ry="7.6" fill="#b07858"/><ellipse cx="8" cy="8" rx="4.6" ry="5.8" fill="#e0cc98"/><path d="M8 3 L9.6 8 L8 13 L6.4 8Z" fill="#c04848"/><ellipse cx="8" cy="8" rx="1.4" ry="2" fill="#d8b050"/></svg>
<svg class="abs" style="left:499px;top:3px" width="16" height="16" viewBox="0 0 16 16"><rect width="16" height="16" rx="1.5" fill="#f6921e"/><path d="M9.3 3.5 V10.5 Q9.3 12.6 7.2 12.6 Q6.3 12.6 5.6 12.2" fill="none" stroke="#fff" stroke-width="1.7"/></svg>
<svg class="abs" style="left:527px;top:3px" width="16" height="16" viewBox="0 0 16 16"><path d="M5 5 Q5 1 8 1 Q11 1 11 5" fill="none" stroke="#111" stroke-width="1.2"/><rect x="0.5" y="5" width="15" height="10.5" fill="#111"/><rect x="1.6" y="7" width="4" height="7" fill="#e8202c"/><rect x="6" y="7" width="4" height="7" fill="#fbbc09"/><rect x="10.4" y="7" width="4" height="7" fill="#2a8c3c"/><rect x="6" y="10.5" width="4" height="3.5" fill="#2c6cc8"/></svg>
<svg class="abs" style="left:555px;top:3px" width="16" height="16" viewBox="0 0 16 16"><rect width="16" height="16" fill="#f8e831"/><path d="M4.5 3 Q8 1 11.5 3" fill="none" stroke="#f0a800" stroke-width="1"/><path d="M9.5 4.5 Q7 4 7 7 V8 H5.5 V9.5 H7 V14.5 H9 V9.5 H11 V8 H9 V7 Q9 6 10.2 6.2Z" fill="#2874f0"/><rect x="8" y="12" width="2.5" height="2.5" fill="#2874f0"/></svg>
<svg class="abs" style="left:584px;top:3px" width="16" height="16" viewBox="0 0 16 16"><path d="M1 4 L5 6 L8 5 L11 6 L15 4 V10 L12 10.5 L8 13.5 L4 10.5 L1 10Z" fill="#3aa8e0"/><path d="M5 6 L8 8.5 L11 6" fill="none" stroke="#dff2fb" stroke-width="0.9"/><path d="M6 10 L8 11.5 M8 9 L10 10.5" stroke="#dff2fb" stroke-width="0.8"/></svg>
<svg class="abs" style="left:611px;top:3px" width="16" height="16" viewBox="0 0 16 16"><ellipse cx="8" cy="5" rx="6.5" ry="4.8" fill="#2868b8"/><path d="M1.5 5 Q8 0 14.5 5 Q8 3.5 1.5 5Z" fill="#1c4c90"/><rect x="3.6" y="6.5" width="8.8" height="5" fill="#e8b890"/><path d="M3.5 10 Q8 18 12.5 10 Q8 12 3.5 10Z" fill="#222"/><rect x="4.2" y="7.6" width="3" height="1.8" rx="0.5" fill="#333"/><rect x="8.8" y="7.6" width="3" height="1.8" rx="0.5" fill="#333"/></svg>
<svg class="abs" style="left:639px;top:3px" width="16" height="16" viewBox="0 0 16 16"><rect x="0" y="2.4" width="16" height="11.2" rx="3" fill="#e62117"/><path d="M6.4 5.2 L10.8 8 L6.4 10.8Z" fill="#fff"/></svg>
<svg class="abs" style="left:669px;top:3px" width="16" height="16" viewBox="0 0 16 16"><path d="M2.7 0.7 H9.5 L13.3 4.5 V15.3 H2.7Z" fill="#fff" stroke="#5f6368" stroke-width="1.1"/><path d="M9.3 0.9 V4.7 H13.1" fill="none" stroke="#5f6368" stroke-width="1.1"/></svg>
<svg class="abs" style="left:730px;top:3px" width="16" height="16" viewBox="0 0 16 16"><rect width="16" height="16" rx="2.5" fill="#1c1c1c"/><text x="1.6" y="11.8" font-family="Liberation Sans" font-weight="bold" font-size="8.6" fill="#fff" letter-spacing="-0.3">IPt</text></svg>
<svg class="abs" style="left:758px;top:3px" width="16" height="16" viewBox="0 0 16 16"><rect width="16" height="16" fill="#fff"/><circle cx="8" cy="8.5" r="6.8" fill="#24406c"/><path d="M1 6 L8.5 3 L15.5 6 L8.5 9Z" fill="#fff" stroke="#24406c" stroke-width="0.6"/><path d="M4.5 8 V11 Q8.5 13.5 12 11 V8 L8.5 9.6Z" fill="#dfe6f2"/><path d="M12 13 L15.5 16 L13 12Z" fill="#24406c"/></svg>
<svg class="abs" style="left:813px;top:3px" width="16" height="16" viewBox="0 0 16 16"><text x="-0.4" y="13.8" font-family="Liberation Serif" font-size="16" fill="#2cb4e8" letter-spacing="-2.5" textLength="16" lengthAdjust="spacingAndGlyphs">M<tspan fill="#e83c2c">C</tspan></text></svg>
<svg class="abs" style="left:842px;top:3px" width="16" height="16" viewBox="0 0 16 16"><circle cx="7" cy="10" r="5.8" fill="#a8b8c8" stroke="#6a7a8a" stroke-width="0.8"/><path d="M1 15.5 Q3 8 14.5 1 Q11 10 3 14.5Z" fill="#e83828"/><path d="M15 0.5 L12 3 L14 4.5Z" fill="#e83828"/><path d="M5 9 L9 13" stroke="#2a60c0" stroke-width="1.6"/></svg>
<svg class="abs" style="left:870px;top:3px" width="16" height="16" viewBox="0 0 16 16"><path d="M2.5 9 Q2.5 1.5 8 1.5 Q13.5 1.5 13.5 9" fill="none" stroke="#2a5aa8" stroke-width="1.7"/><rect x="0.6" y="7" width="3" height="5" rx="1.3" fill="#2a5aa8"/><rect x="12.4" y="7" width="3" height="5" rx="1.3" fill="#2a5aa8"/><path d="M3.8 7.5 Q3.8 3.5 8 3.5 Q12.2 3.5 12.2 7.5 Q12.2 11 10 12.5 L9.5 15.5 H6.5 L6 12.5 Q3.8 11 3.8 7.5Z" fill="#a8b4d8"/><ellipse cx="6.2" cy="8.5" rx="1.3" ry="1.7" fill="#243c78"/><ellipse cx="9.8" cy="8.5" rx="1.3" ry="1.7" fill="#243c78"/></svg>
<svg class="abs" style="left:899px;top:3px" width="16" height="16" viewBox="0 0 16 16"><path d="M10.8 0.5 Q10.9 2 9.9 3 Q9 4 7.8 3.9 Q7.7 2.5 8.7 1.5 Q9.6 0.6 10.8 0.5Z M12.6 5.8 Q11 6.8 11 8.5 Q11.1 10.6 13 11.4 Q12.6 12.6 11.8 13.7 Q10.8 15.2 9.7 15.2 Q8.7 15.2 8.1 14.8 Q7.4 14.5 6.7 14.8 Q5.9 15.2 5.2 15.2 Q4.1 15.2 2.9 13.4 Q1.4 11.2 1.5 8.6 Q1.6 6.5 2.8 5.4 Q3.8 4.4 5.2 4.4 Q6 4.4 6.9 4.8 Q7.5 5 7.8 5 Q8 5 8.8 4.7 Q9.8 4.3 10.7 4.4 Q12 4.6 12.6 5.8Z" fill="#5a5a5a"/></svg>
<svg class="abs" style="left:926px;top:3px" width="16" height="16" viewBox="0 0 16 16"><path d="M4 0.5 H11 L15.5 5 V15.5 H4Z" fill="#7c5cf0"/><path d="M11 0.5 L15.5 5 H11Z" fill="#c8b8fc"/><path d="M2.5 15 Q0 15 0 12.7 Q0 10.8 2 10.5 Q2.5 8 5 8 Q7.3 8 7.9 10.2 Q10 10.2 10 12.5 Q10 15 7.8 15Z" fill="#fff" stroke="#7c5cf0" stroke-width="0.9"/></svg>
<svg class="abs" style="left:954px;top:3px" width="16" height="16" viewBox="0 0 16 16"><path d="M8 0.8 A7.2 7.2 0 0 1 8 15.2 Q6 15.2 4.3 14.2 L0.8 15.2 L1.8 11.8 A7.2 7.2 0 0 1 8 0.8Z" fill="#25d366"/><path d="M5.2 4.3 Q4.3 5.2 4.7 6.6 Q5.5 9 7.8 10.7 Q9.8 12 10.9 11.5 Q11.8 11 11.8 10.2 L10 9.2 L9.2 10 Q7.6 9.4 6.5 7.5 L7.2 6.7 L6.3 4.3Z" fill="#fff"/></svg>
<svg class="abs" style="left:982px;top:3px" width="16" height="16" viewBox="0 0 16 16"><rect x="0.5" y="0.5" width="15" height="15" rx="3" fill="#d8f0e8"/><circle cx="8" cy="8" r="5.8" fill="#38a8d8"/><path d="M4 5 Q6 3 8 4.5 Q9 6.5 7 8 Q5 9 5.5 11.5 Q3.5 10 4 5Z" fill="#a8d848"/><path d="M10 7.5 Q12.5 7 12.8 9.5 Q12 12 10 12.5 Q9.5 10 10 7.5Z" fill="#a8d848"/></svg>
<svg class="abs" style="left:1009px;top:3px" width="16" height="16" viewBox="0 0 16 16"><rect x="0" y="0" width="7.5" height="7.5" fill="#f25022"/><rect x="8.5" y="0" width="7.5" height="7.5" fill="#7fba00"/><rect x="0" y="8.5" width="7.5" height="7.5" fill="#00a4ef"/><rect x="8.5" y="8.5" width="7.5" height="7.5" fill="#ffb900"/></svg>
<svg class="abs" style="left:1038px;top:3px" width="16" height="16" viewBox="0 0 16 16"><rect width="16" height="16" fill="#ececec"/><path d="M2.5 12.5 L1.5 5.5 L4.5 8.5 L5.5 3.5 L8 8 L10.5 3.5 L11.5 8.5 L14.5 5.5 L13.5 12.5Z" fill="#1a1a1a"/><rect x="2.5" y="13" width="11" height="1.3" fill="#1a1a1a"/></svg>
<svg class="abs" style="left:1066px;top:3px" width="16" height="16" viewBox="0 0 16 16"><path d="M8 2 A6.5 6.5 0 1 0 14.5 8.5" fill="none" stroke="#2a78e8" stroke-width="1.6"/><path d="M8 4.5 A4 4 0 1 0 12 8.5" fill="none" stroke="#6aa8f0" stroke-width="1"/><path d="M9 0.5 Q12 1.5 11 5 Q9 4 9 0.5Z" fill="#2a78e8"/><path d="M5.5 7 H10.5 M5.5 9 H10.5 M5.5 11 H10.5 M7 6 V12 M9 6 V12" stroke="#2a78e8" stroke-width="0.7"/></svg>
<svg class="abs" style="left:1095px;top:3px" width="16" height="16" viewBox="0 0 16 16"><path d="M1.5 3.5 L7 2 V14.5 L2.5 15.5Z" fill="#5cb030"/><path d="M7 2 L13.5 1 L14.5 12.5 L7 14.5Z" fill="#3888d0"/><path d="M7 2 V14.5" stroke="#2a6090" stroke-width="0.6"/></svg>
<svg class="abs" style="left:1122px;top:3px" width="16" height="16" viewBox="0 0 16 16"><rect width="16" height="16" fill="#e8e8e8"/><circle cx="5" cy="5" r="2.5" fill="none" stroke="#444" stroke-width="1.6" stroke-dasharray="1.4 1"/><circle cx="5" cy="5" r="1.2" fill="#444"/><path d="M6.5 10 L10.5 6.5 L15 10 V15.5 H6.5Z" fill="#e82828"/><path d="M9 11 H12.5 V14 H9Z" fill="#fff"/><circle cx="10.7" cy="12.5" r="1" fill="#e82828"/></svg>
<svg class="abs" style="left:1150px;top:3px" width="16" height="16" viewBox="0 0 16 16"><path d="M4.5 3 L11.5 4.5 L14 11 L7 14 L2 9Z" fill="none" stroke="#1c9cf0" stroke-width="1.3"/><circle cx="4.5" cy="3" r="2.3" fill="#1c9cf0"/><circle cx="11.5" cy="4.5" r="2.3" fill="#1c9cf0"/><circle cx="14" cy="11" r="1.9" fill="#1c9cf0"/><circle cx="7" cy="14" r="1.9" fill="#1c9cf0"/><circle cx="2" cy="9" r="1.9" fill="#1c9cf0"/></svg>
<svg class="abs" style="left:1197px;top:3px" width="16" height="16" viewBox="0 0 16 16"><rect width="16" height="16" fill="#e4e4e4"/><text x="0.2" y="14.6" font-family="Liberation Sans" font-weight="bold" font-size="16.5" fill="#0a0a0a" textLength="15.6" lengthAdjust="spacingAndGlyphs" letter-spacing="-1.5">DZ</text></svg>
<svg class="abs" style="left:1258px;top:3px" width="16" height="16" viewBox="0 0 16 16"><rect width="16" height="16" fill="#5cc8b8"/><path d="M11 0 H16 V16 H8Z" fill="#48b0a0"/><path d="M3.5 3.5 H12.5 V6 H9.4 V13 H6.6 V6 H3.5Z" fill="#fff"/></svg>
<div class="abs bm" style="left:31px">Apps</div>
<div class="abs bm" style="left:147.5px">pnb</div>
<div class="abs bm" style="left:369.5px;letter-spacing:-0.35px">UoK</div>
<div class="abs bm" style="left:453.5px">cs uok</div>
<div class="abs bm" style="left:688.5px;letter-spacing:-0.95px">PFMS</div>
<div class="abs bm" style="left:779.5px;letter-spacing:-0.97px">NSP</div>
<div class="abs bm" style="left:1171.5px;letter-spacing:-1.4px">PS</div>
<div class="abs bm" style="left:1218.5px;letter-spacing:0.2px">temp</div>
<div class="abs bm" style="left:1279.5px;letter-spacing:-0.75px">TEMP</div>
<svg class="abs" style="left:1334px;top:7px" width="10" height="8" viewBox="0 0 10 8"><path d="M0.8 0.8 L4 4 L0.8 7.2 M5.3 0.8 L8.5 4 L5.3 7.2" fill="none" stroke="#4a4a4a" stroke-width="1.3"/></svg></div>
<div id="content">
<div id="side"><div class="pg">
<div class="abs logo" style="left:35px;top:125px"><span class="php">php</span><span class="mya">MyAdmin</span></div>
<div class="sbx" style="left:48px"><svg class="abs" style="left:3px;top:3px" width="16" height="16" viewBox="0 0 16 16"><path d="M11.5 1.5h2v5h-2z" fill="#ddd" stroke="#555" stroke-width="0.8"/><path d="M3 8 L8 3 L13 8 V14.5 H3Z" fill="#fff" stroke="#555" stroke-width="0.9"/><path d="M1 8.6 L8 1.6 L15 8.6" fill="none" stroke="#e01010" stroke-width="1.7"/><rect x="6.5" y="9.5" width="3" height="5" fill="#2c5aa8"/></svg></div>
<div class="sbx" style="left:75px"><svg class="abs" style="left:3px;top:3px" width="16" height="16" viewBox="0 0 16 16"><rect x="0.6" y="1.6" width="14.8" height="12.8" fill="#fff" stroke="#111" stroke-width="1.1"/><rect x="1.2" y="2.2" width="13.6" height="2.4" fill="#9a9acf"/><rect x="12.4" y="2.2" width="2" height="2" fill="#e01010"/><path d="M1 5h14" stroke="#111" stroke-width="0.8"/><text x="2" y="12.2" font-family="Liberation Sans" font-weight="bold" font-size="6.4" fill="#d00010" letter-spacing="0.2" textLength="12" lengthAdjust="spacingAndGlyphs">SQL</text></svg></div>
<div class="sbx" style="left:102px"><svg class="abs" style="left:3px;top:3px" width="16" height="16" viewBox="0 0 16 16"><path d="M2.5 0.8 H13.5 Q14.8 0.8 14.8 2 V10 Q14.8 11.2 13.5 11.2 H12.6 L12.6 15 L8.8 11.2 H2.5 Q1.2 11.2 1.2 10 V2 Q1.2 0.8 2.5 0.8Z" fill="#9a9acf" stroke="#333" stroke-width="1"/><text x="5" y="10" font-family="Liberation Sans" font-weight="bold" font-size="10.5" fill="#fff">?</text></svg></div>
<div class="sbx" style="left:129px"><svg class="abs" style="left:3px;top:3px" width="16" height="16" viewBox="0 0 16 16"><path d="M2.5 0.8 H13.5 Q14.8 0.8 14.8 2 V10 Q14.8 11.2 13.5 11.2 H12.6 L12.6 15 L8.8 11.2 H2.5 Q1.2 11.2 1.2 10 V2 Q1.2 0.8 2.5 0.8Z" fill="#9a9acf" stroke="#333" stroke-width="1"/><text x="2.2" y="8.4" font-family="Liberation Sans" font-weight="bold" font-size="6.2" fill="#fff" textLength="11.6" lengthAdjust="spacingAndGlyphs">SQL</text></svg></div>
<div class="abs" style="left:72.5px;top:199px;line-height:15px">Database</div>
<div class="sel" style="left:3px;top:214px;width:194px;height:19px;line-height:17px">image_encryption (3)<b style="right:7px;top:6px;border-top-width:6px;border-left-width:3.5px;border-right-width:3.5px"></b></div>
<div class="abs" style="left:3px;top:252px;line-height:15px;white-space:pre"><a style="font-weight:bold;letter-spacing:-0.1px">image_encryption</a> (3)</div>
<div class="abs" style="left:3px;top:302px;width:194px;height:11px;background:#ffcc99"></div>
<div class="tl" style="top:281px"><svg width="10" height="9"><use href="#i-tb"/></svg><span>add_user</span></div>
<div class="tl" style="top:292px"><svg width="10" height="9"><use href="#i-tb"/></svg><span>new_images</span></div>
<div class="tl" style="top:303px"><svg width="10" height="9"><use href="#i-tb"/></svg><span>user</span></div>
</div>
</div>
<div id="main"><div class="abs" style="left:0;top:0;width:6px;height:599px;background:#fff"></div></div>
<div class="pg">
<!-- breadcrumb -->
<svg class="abs" style="left:216px;top:127px" width="15" height="15" viewBox="0 0 15 15"><rect x="5.5" y="0.5" width="9" height="11" fill="#e4e4e4" stroke="#222"/><rect x="6" y="1" width="8" height="2" fill="#9a9acf"/><path d="M6 5.5h8M6 8.5h8" stroke="#555"/><rect x="0.5" y="3.5" width="8" height="5" fill="#f4f4f4" stroke="#222"/><rect x="1" y="4" width="7" height="1.6" fill="#9a9acf"/><rect x="1.5" y="8.5" width="8" height="6" fill="#f0f0f0" stroke="#222"/><rect x="2" y="9" width="7" height="1.6" fill="#9a9acf"/><rect x="10.5" y="9.5" width="4" height="5" fill="#ccc" stroke="#222"/><rect x="11.5" y="12" width="1.3" height="1.3" fill="#e01010"/></svg>
<a class="bc" style="left:237px;top:127px">Server: localhost</a>
<span class="arr" style="left:348px;top:131px"></span>
<svg class="abs" style="left:362px;top:128px" width="15" height="14" viewBox="0 0 15 14"><rect x="0.5" y="6.5" width="7" height="7" fill="#fff" stroke="#222"/><rect x="2.5" y="3.5" width="9" height="7.5" fill="#fff" stroke="#222"/><rect x="4.5" y="0.5" width="10" height="8" fill="#fff" stroke="#222"/><rect x="5" y="1" width="9" height="2" fill="#9a9acf"/><path d="M5 4.5h9M5 6.5h9M8 3v5.5M11 3v5.5" stroke="#333" stroke-width="0.8"/><path d="M1 9.5h3M1 11.5h5" stroke="#333" stroke-width="0.8"/></svg>
<a class="bc" style="left:382px;top:127px">Database: image_encryption</a>
<span class="arr" style="left:564px;top:131px"></span>
<svg class="abs" style="left:579px;top:129px" width="13" height="13" viewBox="0 0 13 13"><rect x="0.5" y="0.5" width="12" height="12" fill="#fff" stroke="#222"/><path d="M1 3.5h11M1 6.5h11M1 9.5h11M4.5 3v9M8.5 3v9" stroke="#444" stroke-width="1"/><rect x="1" y="1" width="11" height="2" fill="#556"/></svg>
<a class="bc" style="left:598px;top:127px">Table: user</a>

<!-- tabs -->
<div class="abs" style="left:213px;top:173px;width:764px;height:1px;background:#000"></div>
<div class="tab act" style="left:213px;width:79px"></div><svg class="ic abs" style="left:223px;top:155px"><use href="#i-browse"/></svg><span class="tt" style="left:240.0px;top:153px">Browse</span>
<div class="tab" style="left:295px;width:85px"></div><svg class="ic abs" style="left:302px;top:157px"><use href="#i-struct"/></svg><span class="tt" style="left:320.8px;top:157px">Structure</span>
<div class="tab" style="left:386px;width:55px"></div><svg class="ic abs" style="left:393px;top:157px"><use href="#i-sql"/></svg><span class="tt" style="left:411.2px;top:157px">SQL</span>
<div class="tab" style="left:446px;width:72px"></div><svg class="ic abs" style="left:454px;top:157px"><use href="#i-search"/></svg><span class="tt" style="left:471.9px;top:157px">Search</span>
<div class="tab" style="left:523px;width:64px"></div><svg class="ic abs" style="left:530px;top:157px"><use href="#i-insert"/></svg><span class="tt" style="left:548.2px;top:157px">Insert</span>
<div class="tab" style="left:592px;width:69px"></div><svg class="ic abs" style="left:599px;top:157px"><use href="#i-export"/></svg><span class="tt" style="left:615.8px;top:157px">Export</span>
<div class="tab" style="left:666px;width:70px"></div><svg class="ic abs" style="left:674px;top:157px"><use href="#i-import"/></svg><span class="tt" style="left:690.7px;top:157px">Import</span>
<div class="tab" style="left:741px;width:96px"></div><svg class="ic abs" style="left:748px;top:157px"><use href="#i-ops"/></svg><span class="tt" style="left:765.8px;top:157px">Operations</span>
<div class="tab red" style="left:843px;width:68px"></div><svg class="ic abs" style="left:850px;top:157px"><use href="#i-empty"/></svg><span class="tt red" style="left:867.3px;top:157px">Empty</span>
<div class="tab red" style="left:916px;width:59px"></div><svg class="ic abs" style="left:924px;top:157px"><use href="#i-drop"/></svg><span class="tt red" style="left:940.4px;top:157px">Drop</span>

<!-- success -->
<div class="abs" style="left:213px;top:178px;width:1129px;height:22px;border:2px solid #00ff00;background:#f0fff0"></div>
<svg class="abs" style="left:225px;top:182px" width="17" height="14" viewBox="0 0 17 14"><defs><linearGradient id="ck" x1="0" y1="0" x2="1" y2="1"><stop offset="0" stop-color="#7ed07e"/><stop offset="1" stop-color="#2f8f2f"/></linearGradient></defs><path d="M0.6 8 L3.2 5.6 L6.2 8.4 L13.2 0.8 L16.2 3.4 L6.4 13.2 Z" fill="url(#ck)" stroke="#3a8a3a" stroke-width="0.6"/></svg>
<div class="abs" style="left:251px;top:181px;line-height:15px">Showing rows 0 - 11 (12 total, Query took 0.0003 sec)</div>

<!-- sql box -->
<div class="abs" style="left:213px;top:200px;width:1129px;height:61px;background:#e5e5e5;border:1px solid #000;border-top:none"></div>
<div class="abs" style="left:214px;top:236px;width:1127px;height:24px;background:#d3dce3"></div>
<pre class="abs sqlc" style="left:217px;top:203.6px"><span class="kw">SELECT</span> <span class="pk">*</span>
<span class="kw">FROM</span> <span class="bq">`user`</span>
<span class="kw">LIMIT</span> <span class="nm">0</span> <span class="pk">,</span> <span class="nm">30</span></pre>
<span class="cb" style="left:952px;top:242px"></span>
<div class="abs" style="left:968px;top:240px;line-height:15px;white-space:pre;letter-spacing:0.08px">Profiling [ <a>Edit</a> ] [ <a>Explain SQL</a> ] [ <a>Create PHP Code</a> ] [ <a>Refresh</a> ]</div>

<!-- nav form top -->
<div class="nav" style="top:0px">
<div class="btn" style="left:296px;top:284px;width:56px;height:21px">Show :</div>
<div class="inp" style="left:356px;top:284px;width:53px;height:21px">30</div>
<div class="abs" style="left:413px;top:286px;line-height:15px;letter-spacing:-0.05px">row(s) starting from record #</div>
<div class="inp" style="left:580px;top:284px;width:74px;height:21px">0</div>
<div class="abs" style="left:244px;top:307px;line-height:15px">in</div>
<div class="sel" style="left:258px;top:306px;width:182px;height:19px">horizontal<b></b></div>
<div class="abs" style="left:444px;top:307px;line-height:15px;letter-spacing:-0.07px">mode and repeat headers after</div>
<div class="inp" style="left:625px;top:305px;width:53px;height:21px">100</div>
<div class="abs" style="left:682px;top:307px;line-height:15px">cells</div>
</div>
<div class="abs" style="left:213px;top:328px;line-height:15px">Sort by key:</div>
<div class="sel" style="left:288px;top:327px;width:173px;height:19px">None<b></b></div>
<div class="abs" style="left:213px;top:346px;line-height:15px">+ <a style="margin-left:0.8px">Options</a></div>

<!-- table -->
<table class="dt abs" style="left:213px;top:361px">
<colgroup><col style="width:33px"><col style="width:29px"><col style="width:29px"><col style="width:27px"><col style="width:63px"><col style="width:163px"><col style="width:73px"><col style="width:56px"><col style="width:60px"><col style="width:103px"><col style="width:50px"></colgroup>
<tr class="h"><th colspan="3"></th><th>id</th><th>userid</th><th>email</th><th>password</th><th>gender</th><th>country</th><th>image_url</th><th>status</th></tr>
<tr class="o"><td class="c"><span class="cbx"></span></td><td class="c"><svg class="ic"><use href="#i-pencil"/></svg></td><td class="c"><svg class="ic"><use href="#i-x"/></svg></td><td class="r">1</td><td>spic</td><td>test1@gmail.com</td><td>spic</td><td>male</td><td>india</td><td>IMG_0571.JPG</td><td class="r">0</td></tr>
<tr class="e"><td class="c"><span class="cbx"></span></td><td class="c"><svg class="ic"><use href="#i-pencil"/></svg></td><td class="c"><svg class="ic"><use href="#i-x"/></svg></td><td class="r">17</td><td>demo</td><td>demo@gmail.commm</td><td>demo</td><td>male</td><td>India</td><td>IMG_0271.JPG</td><td class="r">0</td></tr>
<tr class="o"><td class="c"><span class="cbx"></span></td><td class="c"><svg class="ic"><use href="#i-pencil"/></svg></td><td class="c"><svg class="ic"><use href="#i-x"/></svg></td><td class="r">27</td><td>tufail</td><td>tu@tu.com</td><td>tufail</td><td>male</td><td>India</td><td>IMG_5836.JPG</td><td class="r">0</td></tr>
<tr class="e"><td class="c"><span class="cbx"></span></td><td class="c"><svg class="ic"><use href="#i-pencil"/></svg></td><td class="c"><svg class="ic"><use href="#i-x"/></svg></td><td class="r">26</td><td>fuzail</td><td>byhaqi.fuzail@yahoo.com</td><td>fuzail</td><td>male</td><td>India</td><td>IMG_3150.JPG</td><td class="r">0</td></tr>
<tr class="o"><td class="c"><span class="cbx"></span></td><td class="c"><svg class="ic"><use href="#i-pencil"/></svg></td><td class="c"><svg class="ic"><use href="#i-x"/></svg></td><td class="r">30</td><td>manzoor</td><td>manzoor@gmail.com</td><td>manzoor</td><td>female</td><td>India</td><td>user.jpg</td><td class="r">0</td></tr>
<tr class="e"><td class="c"><span class="cbx"></span></td><td class="c"><svg class="ic"><use href="#i-pencil"/></svg></td><td class="c"><svg class="ic"><use href="#i-x"/></svg></td><td class="r">25</td><td>sanah</td><td>qadrisanah@gmail.com</td><td>sanah</td><td>female</td><td>India</td><td>IMG_5650.JPG</td><td class="r">0</td></tr>
<tr class="o"><td class="c"><span class="cbx"></span></td><td class="c"><svg class="ic"><use href="#i-pencil"/></svg></td><td class="c"><svg class="ic"><use href="#i-x"/></svg></td><td class="r">33</td><td>irfan</td><td>irfan@gmail.com</td><td>irfan</td><td>male</td><td>India</td><td>user.jpg</td><td class="r">0</td></tr>
<tr class="e"><td class="c"><span class="cbx"></span></td><td class="c"><svg class="ic"><use href="#i-pencil"/></svg></td><td class="c"><svg class="ic"><use href="#i-x"/></svg></td><td class="r">52</td><td>basit</td><td>basit@gmail.com</td><td>basit</td><td>male</td><td>Canada</td><td>user.jpg</td><td class="r">0</td></tr>
<tr class="o"><td class="c"><span class="cbx"></span></td><td class="c"><svg class="ic"><use href="#i-pencil"/></svg></td><td class="c"><svg class="ic"><use href="#i-x"/></svg></td><td class="r">53</td><td>haris</td><td>haris@gmail.com</td><td>haris</td><td>male</td><td>Canada</td><td>user.jpg</td><td class="r">0</td></tr>
<tr class="e"><td class="c"><span class="cbx"></span></td><td class="c"><svg class="ic"><use href="#i-pencil"/></svg></td><td class="c"><svg class="ic"><use href="#i-x"/></svg></td><td class="r">54</td><td>usman</td><td>usmi@gmail.com</td><td>usman</td><td>male</td><td>Canada</td><td>user.jpg</td><td class="r">0</td></tr>
<tr class="o"><td class="c"><span class="cbx"></span></td><td class="c"><svg class="ic"><use href="#i-pencil"/></svg></td><td class="c"><svg class="ic"><use href="#i-x"/></svg></td><td class="r">55</td><td>uzma</td><td>uzma@gmail.com</td><td>uzma</td><td>female</td><td>Canada</td><td>user.jpg</td><td class="r">0</td></tr>
<tr class="e"><td class="c"><span class="cbx"></span></td><td class="c"><svg class="ic"><use href="#i-pencil"/></svg></td><td class="c"><svg class="ic"><use href="#i-x"/></svg></td><td class="r">56</td><td>faizan</td><td>faizan@yahoo.com</td><td>faizan</td><td>male</td><td>India</td><td>user.jpg</td><td class="r">0</td></tr>
</table>

<!-- with selected -->
<svg class="abs" style="left:224px;top:659px" width="30" height="17" viewBox="0 0 30 17"><path d="M5.5 4 V15.5 H29" stroke="#000" stroke-width="1.1" fill="none"/><path d="M1.8 6.2 L5.5 0.8 L9.2 6.2Z" fill="#000"/></svg>
<div class="abs" style="left:266px;top:660px;line-height:15px;white-space:pre;letter-spacing:0.1px"><a>Check All</a> / <a>Uncheck All</a> <i>With selected:</i></div>
<svg class="ic abs" style="left:506px;top:660px"><use href="#i-pencil"/></svg>
<svg class="ic abs" style="left:544px;top:660px"><use href="#i-x"/></svg>
<svg class="ic abs" style="left:585px;top:660px"><use href="#i-export"/></svg>

<!-- nav form bottom -->
<div class="nav" style="top:397px">
<div class="btn" style="left:296px;top:284px;width:56px;height:21px">Show :</div>
<div class="inp" style="left:356px;top:284px;width:53px;height:21px">30</div>
<div class="abs" style="left:413px;top:286px;line-height:15px;letter-spacing:-0.05px">row(s) starting from record #</div>
<div class="inp" style="left:580px;top:284px;width:74px;height:21px">0</div>
<div class="abs" style="left:244px;top:307px;line-height:15px">in</div>
<div class="sel" style="left:258px;top:306px;width:182px;height:19px">horizontal<b></b></div>
<div class="abs" style="left:444px;top:307px;line-height:15px;letter-spacing:-0.07px">mode and repeat headers after</div>
<div class="inp" style="left:625px;top:305px;width:53px;height:21px">100</div>
<div class="abs" style="left:682px;top:307px;line-height:15px">cells</div>
</div>
</div>
<div id="vscroll"><svg class="abs" style="left:4px;top:6px" width="9" height="6" viewBox="0 0 9 6"><path d="M0.7 5.2 L4.5 1 L8.3 5.2Z" fill="#a3a3a3"/></svg>
<div class="abs" style="left:2px;top:17px;width:13px;height:411px;background:#c1c1c1"></div>
<svg class="abs" style="left:4px;top:587px" width="9" height="6" viewBox="0 0 9 6"><path d="M0.7 0.8 L4.5 5 L8.3 0.8Z" fill="#505050"/></svg></div>
</div>
<div id="dlbar"><svg class="abs" style="left:21.5px;top:16px" width="13" height="15.8" viewBox="0 0 14 17"><path d="M0.5 0.5 H9.5 L13.5 4.5 V16.5 H0.5Z" fill="#fdfdfd" stroke="#9a9a9a" stroke-width="1"/><path d="M9.5 0.5 V4.5 H13.5" fill="none" stroke="#9a9a9a" stroke-width="1"/><path d="M3 6.5h8M3 8.5h8M3 10.5h8M3 12.5h8M3 4.5h4" stroke="#b4b4b4" stroke-width="1"/></svg>
<div class="abs dt2" style="left:49px">message digest alg....txt</div>
<svg class="abs" style="left:202px;top:21px" width="11" height="7" viewBox="0 0 11 7"><path d="M0.8 6.2 L5.5 1.2 L10.2 6.2" fill="none" stroke="#5a5a5a" stroke-width="1.5"/></svg>
<div class="abs" style="left:230px;top:6px;width:1px;height:36px;background:#c4c4c4"></div>
<svg class="abs" style="left:248px;top:17px" width="14" height="11" viewBox="0 0 14 11"><rect x="0.5" y="0.5" width="13" height="10" fill="#fff" stroke="#8a98a8" stroke-width="1"/><rect x="1.5" y="1.5" width="11" height="4.5" fill="#a4ccee"/><rect x="1.5" y="1.5" width="11" height="1.2" fill="#6c9cd8"/><path d="M1.5 6.5 L5 4.5 L8 6 L10 5 L12.5 6.5 V9.5 H1.5Z" fill="#3c5c58"/><rect x="1.5" y="7.5" width="11" height="2" fill="#2c4850"/></svg>
<div class="abs dt2" style="left:276px">scan0004.jpg</div>
<svg class="abs" style="left:429px;top:21px" width="11" height="7" viewBox="0 0 11 7"><path d="M0.8 6.2 L5.5 1.2 L10.2 6.2" fill="none" stroke="#5a5a5a" stroke-width="1.5"/></svg>
<div class="abs" style="left:457px;top:6px;width:1px;height:36px;background:#c4c4c4"></div>
<div class="abs" style="left:1252px;top:9px;width:78px;height:28.5px;border:1.5px solid #ababab;border-radius:3.5px;background:#fdfdfd"></div>
<div class="abs" style="left:1268px;top:16px;line-height:15px;font-size:12px;color:#111;letter-spacing:0.05px;white-space:nowrap">Show all</div>
<svg class="abs" style="left:1343px;top:18px" width="10" height="10" viewBox="0 0 10 10"><path d="M0.6 0.6 L9.4 9.4 M9.4 0.6 L0.6 9.4" stroke="#4e4e4e" stroke-width="1.9"/></svg></div>
</body></html>
